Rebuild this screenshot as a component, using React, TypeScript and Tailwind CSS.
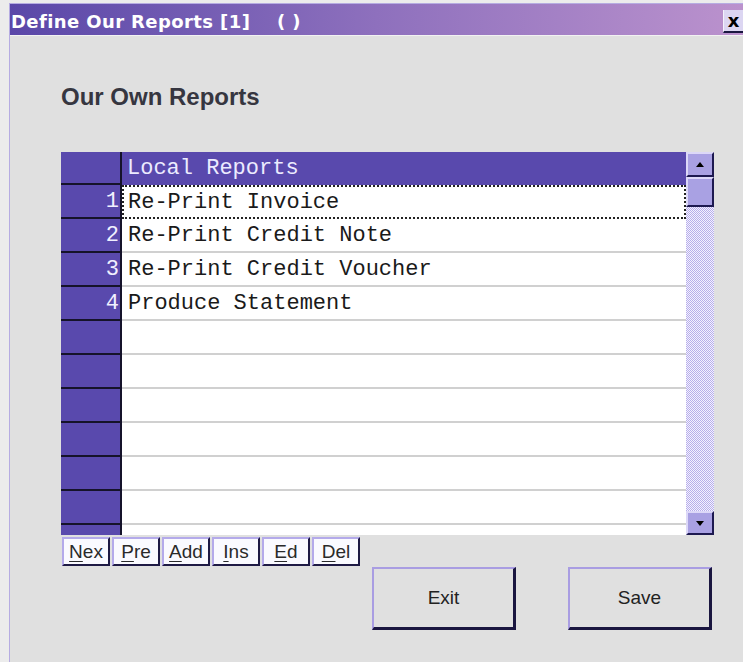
import React from 'react';

const REPORTS = ['Re-Print Invoice', 'Re-Print Credit Note', 'Re-Print Credit Voucher', 'Produce Statement'];
const ROW_COUNT = 11;

const GRID_FONT = { fontFamily: '"Liberation Mono", "Courier New", monospace' };
const UI_FONT = { fontFamily: '"Liberation Sans", Arial, sans-serif' };

const ScrollButton: React.FC<{ dir: 'up' | 'down'; className?: string }> = ({ dir, className = '' }) => (
  <div
    className={`flex items-center justify-center bg-[#a9a1e3] border-t-2 border-l-2 border-[#dcd8f8] border-r-2 border-b-2 border-r-[#1d1950] border-b-[#1d1950] ${className}`}
  >
    {dir === 'up' ? (
      <div className="w-0 h-0 border-x-[4px] border-x-transparent border-b-[5px] border-b-black" />
    ) : (
      <div className="w-0 h-0 border-x-[4px] border-x-transparent border-t-[5px] border-t-black" />
    )}
  </div>
);

const SmallButton: React.FC<{ label: string }> = ({ label }) => (
  <button
    className="w-[48px] h-[29px] flex items-center justify-center bg-[#fafaff] border-t-2 border-l-2 border-[#b4aaea] border-r-2 border-b-2 border-r-[#1e1a44] border-b-[#1e1a44] text-[19px] text-[#2a2a2a] leading-none"
    style={UI_FONT}
  >
    <span className="underline underline-offset-[3px]">{label[0]}</span>
    {label.slice(1)}
  </button>
);

const BigButton: React.FC<{ label: string }> = ({ label }) => (
  <button
    className="w-[144px] h-[63px] flex items-center justify-center bg-[#e0e0e0] border-t-2 border-l-2 border-[#a99de2] border-r-[3px] border-b-[3px] border-r-[#1a1640] border-b-[#1a1640] text-[19px] text-[#222]"
    style={UI_FONT}
  >
    {label}
  </button>
);

export default function App() {
  const rows = Array.from({ length: ROW_COUNT }, (_, i) => REPORTS[i] ?? '');

  return (
    <div className="w-[743px] h-[662px] bg-[#ececec] pl-[9px] pt-[3px] overflow-hidden">
      <div className="h-full flex flex-col border-l border-t border-[#b6ace2]">
        {/* Title bar */}
        <div className="h-[32px] flex items-center justify-between bg-gradient-to-r from-[#5a47a8] via-[#8e70bd] to-[#bb92cd] border-b border-[#f2f2f2]">
          <span
            className="mt-[4px] pl-[1px] text-white font-bold text-[18px] leading-[18px] tracking-[0.4px] whitespace-pre"
            style={{ fontFamily: '"DejaVu Sans", Tahoma, sans-serif' }}
          >
            {'Define Our Reports [1]    ( )'}
          </span>
          <div
            className="self-start mt-[6px] w-[20px] h-[23px] flex items-center justify-center bg-[#dcd6f2] border-l border-[#f4f2fc] border-b-2 border-b-[#1a1640] text-black font-black text-[18px] leading-none"
            style={{ fontFamily: '"DejaVu Sans", Tahoma, sans-serif' }}
          >
            x
          </div>
        </div>

        {/* Body */}
        <div className="flex-1 bg-[#e0e0e0] pl-[51px] pt-[49px]">
          <h1 className="text-[24px] leading-[24px] font-bold text-[#363640]" style={UI_FONT}>
            Our Own Reports
          </h1>

          {/* Report grid */}
          <div className="mt-[43px] w-[653px] h-[383px] flex overflow-hidden" style={GRID_FONT}>
            <div className="flex-1 flex flex-col overflow-hidden">
              <div className="flex h-[33px] shrink-0">
                <div className="w-[61px] bg-[#5949ad] border-r-2 border-b-2 border-[#15132a]" />
                <div className="flex-1 flex items-center bg-[#5949ad] pl-[5px] text-[22px] text-[#ecebff]">
                  Local Reports
                </div>
              </div>
              {rows.map((text, i) => (
                <div key={i} className="flex h-[34px] shrink-0">
                  <div className="w-[61px] flex items-center justify-end pr-[1px] bg-[#5949ad] border-r-2 border-b-2 border-[#15132a] text-[22px] text-[#f0f0ff]">
                    {text ? i + 1 : ''}
                  </div>
                  <div
                    className={`flex-1 flex items-center bg-white text-[22px] text-[#1a1a1a] whitespace-pre ${
                      i === 0
                        ? 'border-2 border-dotted border-[#222] pl-[4px]'
                        : 'border-b-2 border-[#d0d0d0] pl-[6px]'
                    }`}
                  >
                    {text}
                  </div>
                </div>
              ))}
            </div>

            {/* Vertical scrollbar */}
            <div className="w-[28px] h-full flex flex-col">
              <ScrollButton dir="up" className="h-[25px] shrink-0" />
              <div className="h-[30px] shrink-0 bg-[#a9a1e3] border-t-2 border-l-2 border-[#dcd8f8] border-r-2 border-b-2 border-r-[#1d1950] border-b-[#1d1950]" />
              <div className="flex-1 bg-[repeating-conic-gradient(#b7aeea_0_25%,#f4f2ff_0_50%)] bg-[length:2px_2px]" />
              <ScrollButton dir="down" className="h-[24px] shrink-0" />
            </div>
          </div>

          {/* Record navigation */}
          <div className="mt-[2px] ml-[1px] flex gap-[2px]">
            {['Nex', 'Pre', 'Add', 'Ins', 'Ed', 'Del'].map(l => (
              <SmallButton key={l} label={l} />
            ))}
          </div>

          <div className="mt-[1px] w-[653px] flex justify-end gap-[52px] pr-[2px]">
            <BigButton label="Exit" />
            <BigButton label="Save" />
          </div>
        </div>
      </div>
    </div>
  );
}
